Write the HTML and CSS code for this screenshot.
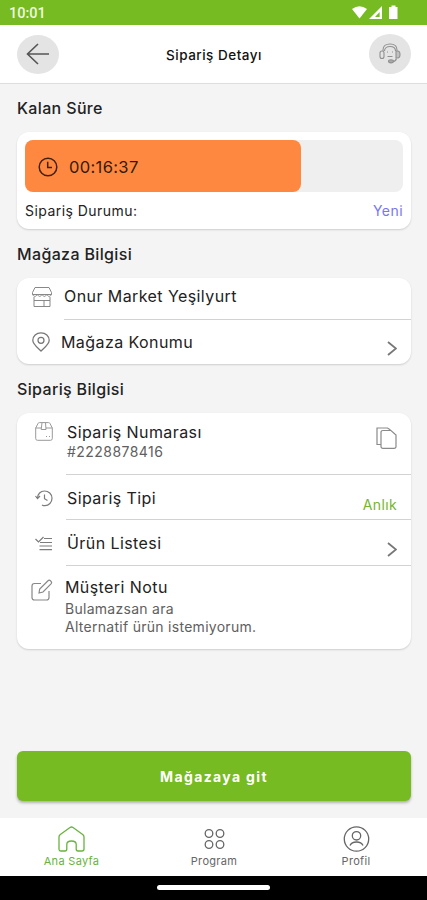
FILE: index.html
```html
<!DOCTYPE html>
<html lang="tr">
<head>
<meta charset="utf-8">
<meta name="viewport" content="width=device-width, initial-scale=1">
<title>Sipariş Detayı</title>
<link rel="stylesheet" href="styles.css">
</head>
<body>
<div class="app">
  <div class="status">
    <span class="clock">10:01</span>
    <svg class="signals" width="50" height="16" viewBox="0 0 50 16" fill="#fff">
      <path d="M1 4Q8.500 -1.500 16 4L8.500 13.500Z"/>
      <path d="M31 1V14H18Z"/><path d="M28.600 7V12H24Z" fill="#76bb21"/>
      <path d="M40.500 0.500h4v1.500h2v12h-8.500v-12h2.500z"/>
    </svg>
  </div>
  <header class="header">
    <button class="round" aria-label="Geri"><svg width="24" height="22" viewBox="0 0 24 22" fill="none" stroke="#555" stroke-width="1.600"><path d="M23 11H1M12 1L1.500 11L12 21"/></svg></button>
    <h1>Sipariş Detayı</h1>
    <button class="round" aria-label="Destek"><svg width="22" height="22" viewBox="0 0 22 22" fill="none" stroke="#909090" stroke-width="1.100"><path d="M4 8V7C4 3 7 1 11 1s7 2 7 6v1M5.500 8C5.500 5 8 3.500 11 3.500S16.500 5 16.500 8"/><rect x="1" y="8" width="4" height="7.500" rx="2"/><path d="M17 8h1.500c1.500 0 2.500 1.500 2.500 3.500s-1 3.500-2.500 3.500H17z" fill="#c0c0c0"/><path d="M8 9h1M13 9h1M8.500 13.500h5M17.500 15.500c-.5 2-2 3-4 3"/><ellipse cx="12" cy="18.300" rx="2.500" ry="1.600" fill="#aaa"/></svg></button>
  </header>
  <main class="content">
    <h2>Kalan Süre</h2>
    <section class="card timer">
      <div class="track">
        <div class="fill" style="width:73%">
          <svg width="20" height="20" viewBox="0 0 20 20" fill="none" stroke="#42200e" stroke-width="1.500"><circle cx="10" cy="10" r="8.800"/><path d="M9.700 4.800v5.700h4.300"/></svg>
          <span>00:16:37</span>
        </div>
      </div>
      <div class="state"><span>Sipariş Durumu:</span><span class="new">Yeni</span></div>
    </section>

    <h2 class="store-title">Mağaza Bilgisi</h2>
    <section class="card">
      <div class="row store">
        <svg class="icon" width="20" height="20" viewBox="0 0 20 20" fill="none" stroke="#888" stroke-width="1"><path d="M3 .5h14l2.500 5v2H.5v-2zM.5 7.500c1.600 2.500 3.200 2.500 4.800 0 1.600 2.500 3.200 2.500 4.700 0 1.600 2.500 3.200 2.500 4.800 0 1.500 2.500 3.100 2.500 4.700 0M2 10v9.500h16V10M2 13.500h10M12 19.500v-6h6"/></svg>
        <div class="text"><span class="label onur">Onur Market Yeşilyurt</span></div>
      </div>
      <div class="row place">
        <svg class="icon" width="18" height="20" viewBox="0 0 18 20" fill="none" stroke="#777" stroke-width="1.250"><path d="M9 19C6 16 .8 12.500.8 8.300.8 4 4.300.8 9 .8s8.200 3.200 8.200 7.500C17.200 12.500 12 16 9 19z"/><circle cx="9" cy="8.300" r="3"/></svg>
        <div class="text"><span class="label konum">Mağaza Konumu</span></div>
        <svg class="chevron" width="10" height="15" viewBox="0 0 10 15" fill="none" stroke="#777" stroke-width="1.800"><path d="M1 1l8 6.500L1 14"/></svg>
      </div>
    </section>

    <h2 class="order-title">Sipariş Bilgisi</h2>
    <section class="card">
      <div class="row number">
        <svg class="icon" width="18" height="19" viewBox="0 0 18 19" fill="none" stroke="#999" stroke-width="1"><path d="M.7 6L3 1.500Q3.300.6 4.500.6h9q1.200 0 1.500.9L17.300 6v10.500q0 1.800-1.800 1.800h-13Q.7 18.300.7 16.500zM.7 6h5.500M11 6h6.300M6.200 7.500L7 .8M11 7.500L10.500.8M6.200 7.500H11M11 15l1-1M14 15l1-1"/></svg>
        <div class="text"><span class="label numara">Sipariş Numarası</span><span class="sub digits">#2228878416</span></div>
        <svg class="copy" width="21" height="22" viewBox="0 0 21 22" fill="none" stroke="#8a8a8a" stroke-width="1.200"><path d="M5 17.500H1V1h10.500l3 2"/><path d="M5 5.500Q5 3.500 7 3.500h8l5 4.500v11.500q0 1.800-2 1.800H7q-2 0-2-1.800z"/></svg>
      </div>
      <div class="row type">
        <svg class="icon" width="18" height="17" viewBox="0 0 18 17" fill="none" stroke="#7c7c7c" stroke-width="1.200"><path d="M2.500 8C2.700 4 5.500 1 9.500 1s7.500 3 7.500 7.200-3.200 7.500-7 7.500c-1.300 0-2.200-.3-3-.8M.5 6l2 2.500L5 6M9.500 4.500v4.200l3 1.800"/></svg>
        <div class="text"><span class="label tip">Sipariş Tipi</span></div>
        <span class="instant">Anlık</span>
      </div>
      <div class="row list">
        <svg class="icon" width="18" height="15" viewBox="0 0 18 15" fill="none" stroke="#7c7c7c" stroke-width="1.200"><path d="M.5 3l3 3 5-5M9 2.500h8M5 6.500h12M4.500 10h12.500M4.500 13.700h12.500"/></svg>
        <div class="text"><span class="label liste">Ürün Listesi</span></div>
        <svg class="chevron" width="10" height="15" viewBox="0 0 10 15" fill="none" stroke="#777" stroke-width="1.800"><path d="M1 1l8 6.500L1 14"/></svg>
      </div>
      <div class="row note">
        <svg class="icon" width="22" height="22" viewBox="0 0 22 22" fill="none" stroke="#888" stroke-width="1.200"><path d="M10 4.500H3.500Q1 4.500 1 7v11.500Q1 21 3.500 21h12q2.500 0 2.500-2.500V12"/><path d="M8 14l.7-4L17 1.800q1.200-1.200 2.500 0l.5.5q1.200 1.200 0 2.500L12 13z"/></svg>
        <div class="text"><span class="label notu">Müşteri Notu</span><span class="sub ara">Bulamazsan ara</span><span class="sub alt">Alternatif ürün istemiyorum.</span></div>
      </div>
    </section>
    <button class="go">Mağazaya git</button>
  </main>
  <nav class="tabs">
    <a class="tab active"><svg width="27" height="26" viewBox="0 0 27 26" fill="none" stroke="currentColor" stroke-width="1.300"><path d="M1 11Q1 9.500 2.300 8.500L12 1.500q1.500-1 3 0l9.700 7q1.300 1 1.300 2.500v12q0 2-2 2h-4q-1.800 0-1.800-2v-4.500q0-3.500-4.700-3.500t-4.700 3.500V23q0 2-1.800 2H3q-2 0-2-2z"/></svg><span>Ana Sayfa</span></a>
    <a class="tab"><svg width="27" height="26" viewBox="0 0 27 26" fill="none" stroke="currentColor" stroke-width="1.300"><circle cx="8" cy="7.500" r="3.800"/><circle cx="19" cy="7.500" r="3.800"/><circle cx="8" cy="18.500" r="3.800"/><circle cx="19" cy="18.500" r="3.800"/></svg><span>Program</span></a>
    <a class="tab"><svg width="27" height="26" viewBox="0 0 27 26" fill="none" stroke="currentColor" stroke-width="1.300"><circle cx="13.500" cy="13" r="12.200"/><circle cx="13.500" cy="9.800" r="4.200"/><path d="M7 19.500q1.500-3.500 6.500-3.500t6.500 3.500"/></svg><span>Profil</span></a>
  </nav>
  <div class="gesture"><i></i></div>
</div>
</body>
</html>
```
FILE: styles.css
```css
* { box-sizing: border-box; }
body { margin: 0; font-family: Inter, sans-serif; color: #222; background: #f4f4f4; }
button { border: 0; padding: 0; font-family: inherit; }
h1, h2 { margin: 0; }
svg { display: block; flex: none; }
.app { display: flex; flex-direction: column; width: 427px; height: 900px; overflow: hidden; }

.status { height: 25px; background: #76bb21; display: flex; align-items: center; justify-content: space-between; padding: 2px 26px 0 9px; }
.clock { font: 500 14.500px/20px Roboto, sans-serif; color: #edf8df; }
.signals { margin-top: -1px; }
.header { height: 59px; background: #fff; border-bottom: 1px solid #dedede; display: flex; align-items: center; justify-content: space-between; padding: 0 16px 0 17px; }
.header h1 { font-size: 13.500px; font-weight: 500; color: #111; letter-spacing: .5px; padding-top: 2px; }
.round { width: 42px; height: 40px; border-radius: 50%; background: #e4e4e4; display: grid; place-items: center; }
.round:first-child { height: 39px; }

.content { flex: 1; display: flex; flex-direction: column; padding: 14px 16px 17px 17px; }
h2 { font-size: 16px; font-weight: 500; line-height: 20px; letter-spacing: .35px; margin-bottom: 14px; }
.store-title { margin-top: 15px; }
.order-title { margin-top: 15px; }
.card { background: #fff; border-radius: 12px; box-shadow: 0 1px 2px rgba(0, 0, 0, .16); }
.timer { height: 97px; padding: 8px; }
.track { height: 52px; border-radius: 8px; background: #efefef; }
.fill { height: 100%; border-radius: 8px; background: #ff8840; display: flex; align-items: center; gap: 11px; padding: 2px 0 0 13px; font-size: 16.500px; letter-spacing: .35px; color: #321a0d; }
.state { display: flex; justify-content: space-between; font-size: 14px; line-height: 18px; letter-spacing: .45px; margin-top: 10px; }
.new { color: #7777ef; }

.row { display: flex; align-items: flex-start; position: relative; }
.text { display: flex; flex-direction: column; flex: 1; }
.row::after { content: ""; position: absolute; left: 49px; right: 0; bottom: 0; height: 1px; background: #d2d2d2; }
.row:last-child::after { display: none; }
.label { font-size: 16px; line-height: 20px; letter-spacing: .42px; color: #222; }
.sub { font-size: 14px; line-height: 18px; color: #606060; }
.store { height: 42px; padding: 8px 0 0 15px; gap: 12px; }
.store .icon { margin-top: 1px; }
.store::after { left: 47px; }
.place { height: 44px; padding: 12px 14px 0 15px; gap: 11px; }
.place .chevron { margin-top: 9px; }
.number { height: 62px; padding: 9px 14px 0 18px; gap: 14px; }
.number .copy { margin-top: 5px; }
.digits { letter-spacing: .45px; margin-top: 1px; }
.number .label { margin-top: 0; }
.type { height: 45px; padding: 13px 14px 0 18px; gap: 14px; }
.type .icon { margin-top: 2px; }
.instant { color: #76b52d; font-size: 14px; line-height: 18px; letter-spacing: .35px; margin-top: 8px; }
.list { height: 46px; padding: 13px 14px 0 18px; gap: 14px; }
.list .icon { margin-top: 3px; }
.list .chevron { margin-top: 9px; }
.note { height: 83px; padding: 11px 14px 0 14px; gap: 12px; }
.note .icon { margin-top: 2px; }
.note .sub { letter-spacing: .28px; }
.note .ara { margin-top: 3px; }

.go { margin-top: auto; height: 50px; border-radius: 6px; background: #76bb21; color: #fff; font-size: 14px; font-weight: 700; letter-spacing: 1.350px; box-shadow: 0 2px 3px rgba(0, 0, 0, .28); }
.tabs { height: 58px; background: #fff; display: grid; grid-template-columns: 143px 142px 142px; }
.tab { display: flex; flex-direction: column; align-items: center; padding-top: 8px; color: #666; font-size: 11px; line-height: 14px; gap: 2px; letter-spacing: .3px; }
.tab.active { color: #69b33c; }
.gesture { height: 24px; background: #000; display: flex; justify-content: center; padding-top: 9px; }
.gesture i { width: 113px; height: 5px; border-radius: 3px; background: #fff; }
```
